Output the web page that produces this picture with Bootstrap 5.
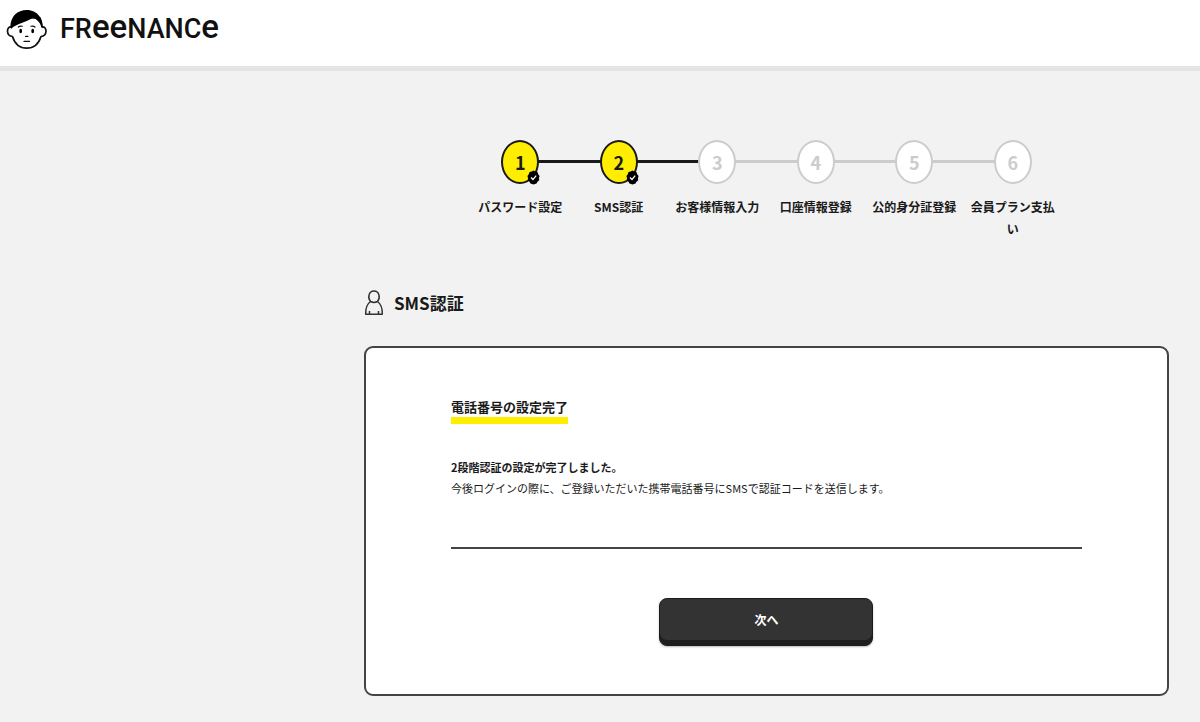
<!DOCTYPE html>
<html lang="ja">
<head>
<meta charset="utf-8">
<meta name="viewport" content="width=device-width, initial-scale=1">
<title>SMS認証 | FREENANCE</title>
<link href="https://cdn.jsdelivr.net/npm/bootstrap@5.3.0/dist/css/bootstrap.min.css" rel="stylesheet">
<style>
body { background: #f2f2f2; color: #1a1a1a; font-family: "Noto Sans CJK JP", sans-serif; font-size: 11px; line-height: 21px; }
.site-header { height: 71px; border-bottom: 5px solid #e4e4e4; }
.brand-link { padding: 8px 6px 0; gap: 12px; }
.brand-name { font-family: "Roboto", sans-serif; font-size: 27px; line-height: 40px; font-weight: 500; color: #111; }
.brand-round { font-size: 33px; line-height: 1; }
.page-main { padding: 69px 31px 26px 0; margin-left: 30.33%; }
.stepper { max-width: 591px; }
.step-item { flex: 1 1 0; min-width: 0; font-size: 12px; line-height: 22px; font-weight: 700; word-break: break-all; }
.step-item + .step-item::before { content: ""; position: absolute; top: 20px; right: 50%; width: 100%; height: 3px; background: #ccc; }
.step-item.reached + .step-item::before { background: #1a1a1a; }
.step-dot { z-index: 1; width: 38px; height: 44px; border: 2px solid #ccc; border-radius: 50%; background: #fff; color: #ccc; font-size: 18px; }
.reached .step-dot { border-color: #1a1a1a; background: #ffee00; color: #1a1a1a; }
.step-check { right: -3px; bottom: -3px; width: 13px; height: 15px; }
.step-label { padding: 0 5px; margin-top: 12px; }
.page-title { font-size: 17px; line-height: 26px; margin: 50px 0 30px; gap: 10px; }
.panel { border: 2px solid #444; border-radius: 9px; padding: 48px 85px; }
.panel-title { font-size: 13px; line-height: 21px; border-bottom: 7px solid #ffee00; margin-bottom: 33px; }
.divider { border-top: 2px solid #444; opacity: 1; margin: 48px 0 49px; }
.btn-next { width: 214px; max-width: 100%; height: 48px; padding: 0 0 4px; border-radius: 8px; font-size: 12px; --bs-btn-color: #fff; --bs-btn-bg: #333; --bs-btn-border-color: #1c1c1c; --bs-btn-hover-color: #fff; --bs-btn-hover-bg: #444; box-shadow: inset 0 -5px 0 #1e1e1e, 0 1px 2px #0004; }
@media (max-width: 900px) { .page-main { margin-left: 31px; } .panel { padding: 40px 24px; } }
</style>
</head>
<body>
<header class="site-header bg-white">
  <a href="#" class="brand-link d-inline-flex align-items-center text-decoration-none" aria-label="FREENANCE">
    <svg width="42" height="42" viewBox="0 0 42 42" aria-hidden="true">
      <path d="M5.500 19C0 18 0 28 6.500 28.500 9 36.500 14 40.200 20.700 40.200S32.500 36.500 35 28.500C41.500 28 41.500 18 36 19L34 10H8Z" fill="#fff" stroke="#111" stroke-width="1.700" stroke-linejoin="round"/>
      <path d="M5 21C3.500 17 5.500 10 9 6.500 12 3.500 16 2 21 2 31 2 38 11 36.500 20.500 34.500 15 31.500 11.500 26.500 9.500 23 13.500 10 15.500 5 21Z" fill="#000"/>
      <path d="M12.300 19Q14 17.500 16.200 18.300M25 18.300Q27.500 17.500 29 19M19.500 28.300H22M18 33.400H23.500" fill="none" stroke="#111" stroke-width="1.200" stroke-linecap="round"/>
      <ellipse cx="14.700" cy="23" rx="1.400" ry="2.300"/><ellipse cx="26.700" cy="23" rx="1.400" ry="2.300"/>
    </svg>
    <span class="brand-name">FR<span class="brand-round">ee</span>NANC<span class="brand-round">e</span></span>
  </a>
</header>
<main class="page-main">
  <ol class="stepper list-unstyled d-flex mx-auto mb-0 text-center">
    <li class="step-item reached position-relative d-flex flex-column align-items-center">
      <span class="step-dot position-relative d-flex align-items-center justify-content-center">1
        <svg class="step-check position-absolute" viewBox="0 0 13 15" aria-hidden="true"><path d="M6.500.5 8.300 1.600 10.500 2 11.200 4.300 12.600 6 12 8 12.200 10.200 10.500 11.800 9.500 13.600 6.500 14.500 3.500 13.600 2.500 11.800.8 10.200 1 8 .4 6 1.800 4.300 2.500 2 4.700 1.600Z"/><path d="M4 7.500 6 9.500 9.200 5.700" fill="none" stroke="#fff" stroke-width="1.200"/></svg>
      </span>
      <span class="step-label">パスワード設定</span>
    </li>
    <li class="step-item reached position-relative d-flex flex-column align-items-center">
      <span class="step-dot position-relative d-flex align-items-center justify-content-center">2
        <svg class="step-check position-absolute" viewBox="0 0 13 15" aria-hidden="true"><path d="M6.500.5 8.300 1.600 10.500 2 11.200 4.300 12.600 6 12 8 12.200 10.200 10.500 11.800 9.500 13.600 6.500 14.500 3.500 13.600 2.500 11.800.8 10.200 1 8 .4 6 1.800 4.300 2.500 2 4.700 1.600Z"/><path d="M4 7.500 6 9.500 9.200 5.700" fill="none" stroke="#fff" stroke-width="1.200"/></svg>
      </span>
      <span class="step-label">SMS認証</span>
    </li>
    <li class="step-item position-relative d-flex flex-column align-items-center">
      <span class="step-dot d-flex align-items-center justify-content-center">3</span><span class="step-label">お客様情報入力</span>
    </li>
    <li class="step-item position-relative d-flex flex-column align-items-center">
      <span class="step-dot d-flex align-items-center justify-content-center">4</span><span class="step-label">口座情報登録</span>
    </li>
    <li class="step-item position-relative d-flex flex-column align-items-center">
      <span class="step-dot d-flex align-items-center justify-content-center">5</span><span class="step-label">公的身分証登録</span>
    </li>
    <li class="step-item position-relative d-flex flex-column align-items-center">
      <span class="step-dot d-flex align-items-center justify-content-center">6</span><span class="step-label">会員プラン支払い</span>
    </li>
  </ol>
  <h1 class="page-title d-flex align-items-center fw-bold">
    <svg width="20" height="26" viewBox="0 0 20 26" fill="none" stroke="#333" stroke-width="1.500" stroke-linejoin="round" aria-hidden="true"><path d="M6.500 11.500C3.500 8 4.500 1 10 1S16.500 8 13.500 11.500C17 14 18.500 18 18.300 24.200H1.700C1.500 18 3 14 6.500 11.500ZM6.500 11.500Q10 13.300 13.500 11.500M5.500 21V24.200M14.500 21V24.200"/></svg>
    SMS認証
  </h1>
  <section class="panel bg-white">
    <h2 class="panel-title d-table fw-bold">電話番号の設定完了</h2>
    <p class="mb-0 fw-bold">2段階認証の設定が完了しました。</p>
    <p class="mb-0">今後ログインの際に、ご登録いただいた携帯電話番号にSMSで認証コードを送信します。</p>
    <hr class="divider">
    <div class="d-flex justify-content-center"><button type="button" class="btn btn-next fw-bold">次へ</button></div>
  </section>
</main>
<script src="https://cdn.jsdelivr.net/npm/bootstrap@5.3.0/dist/js/bootstrap.bundle.min.js"></script>
</body>
</html>
